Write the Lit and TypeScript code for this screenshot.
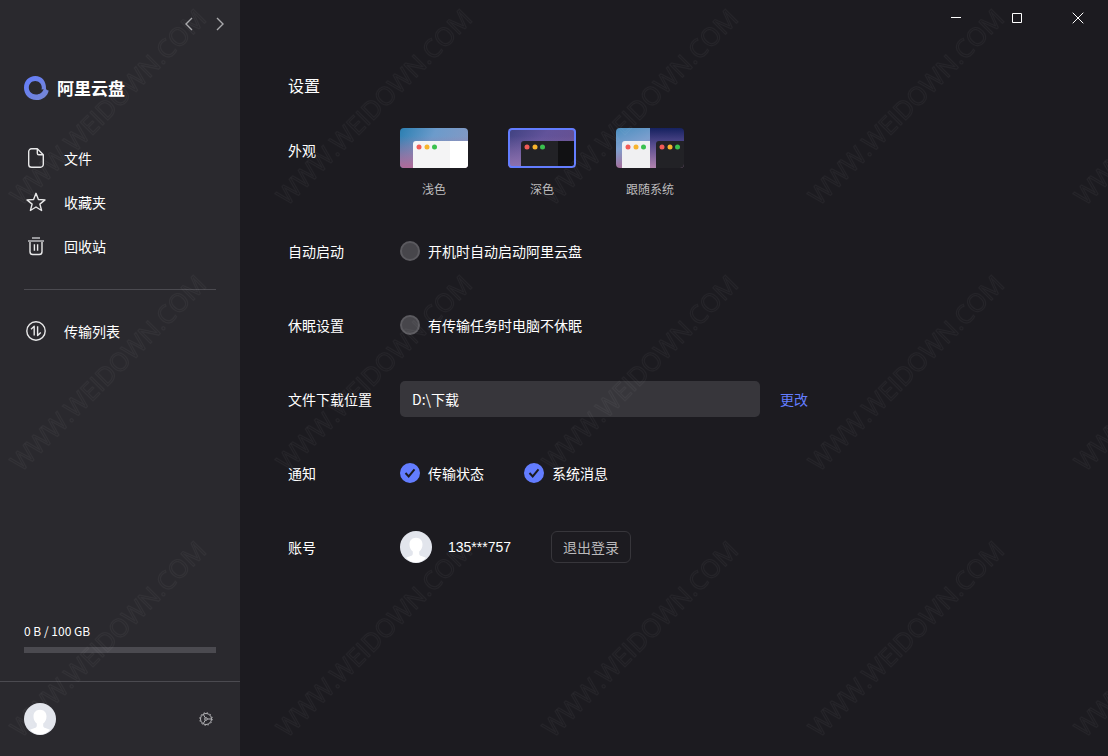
import { LitElement, html, css, svg } from "lit";
import { customElement, state } from "lit/decorators.js";

const personShape = svg`
  <circle cx="16" cy="16" r="16" fill="#e2e5ec"/>
  <path d="M16 6.800c-4 0-6.500 2.800-6.500 6.600 0 3 1.200 5.600 3.300 7.100v2.300c0 1.200-.8 1.900-2.200 2.300l-4.600 1.600C8.500 29.400 12 31.600 16 31.600s7.500-2.200 10-4.900l-4.600-1.600c-1.400-.4-2.200-1.100-2.200-2.300v-2.300c2.100-1.500 3.300-4.100 3.300-7.100 0-3.800-2.500-6.600-6.500-6.600z" fill="#fff"/>`;

const navIcons: Record<string, unknown> = {
  file: svg`<path d="M11.300.8H5.500A2.800 2.800 0 0 0 2.700 3.600v12.800a2.800 2.800 0 0 0 2.800 2.800h9a2.800 2.800 0 0 0 2.800-2.800V6.800L11.300.8v4.500a1.500 1.500 0 0 0 1.500 1.500h4.500"/>`,
  star: svg`<path d="M10 1.300l2.400 6.200 6.600.4-5.100 4.200 1.700 6.400L10 15l-5.600 3.500 1.700-6.400L1 7.900l6.600-.4z"/>`,
  trash: svg`<path d="M6 2h8M2 5h16" stroke="#98989c" stroke-width="1.800"/><path d="M4 6v9.700A2.800 2.800 0 0 0 6.800 18.500h6.400a2.800 2.800 0 0 0 2.800-2.800V6M8.400 8.300v6.400M11.600 8.300v6.400"/>`,
  transfer: svg`<circle cx="10" cy="10" r="9.200"/><path d="M5 8.200L8.200 5.300v9.200M11.600 5.300v9.200l3.200-3"/>`,
};

function navIcon(name: string) {
  return html`<svg class="nav-icon" viewBox="0 0 20 20" aria-hidden="true">${navIcons[name]}</svg>`;
}

function themeArt(kind: string) {
  const dots = (x: number) => svg`
    <circle cx=${x} cy="19" r="2.500" fill="#f25b57"/>
    <circle cx=${x + 8} cy="19" r="2.500" fill="#f7b42d"/>
    <circle cx=${x + 15.500} cy="19" r="2.500" fill="#3bc14f"/>`;
  if (kind === "light")
    return svg`
      <defs>
        <linearGradient id="l1" x1="0" y1="0" x2="1" y2=".3"><stop stop-color="#2b7fb2"/><stop offset=".5" stop-color="#6c9bcb"/><stop offset="1" stop-color="#8299c4"/></linearGradient>
        <linearGradient id="l2" x1="0" y1="0" x2="0" y2="1"><stop offset=".2" stop-color="#b06a98" stop-opacity="0"/><stop offset="1" stop-color="#b06a98"/></linearGradient>
      </defs>
      <rect width="68" height="40" fill="url(#l1)"/><rect width="68" height="40" fill="url(#l2)"/>
      <path d="M13 40V16a3 3 0 0 1 3-3h52v27z" fill="#f4f4f5"/><path d="M50 13h18v27H50z" fill="#fff"/>${dots(19)}`;
  if (kind === "dark")
    return svg`
      <defs><linearGradient id="d1" x1="0" y1="0" x2="1" y2=".5"><stop stop-color="#3e4180"/><stop offset=".5" stop-color="#62539a"/><stop offset="1" stop-color="#675090"/></linearGradient>
      <linearGradient id="d2" x1="0" y1="0" x2="0" y2="1"><stop offset=".2" stop-color="#8f72ae" stop-opacity="0"/><stop offset="1" stop-color="#8f72ae"/></linearGradient></defs>
      <rect width="68" height="40" fill="url(#d1)"/><rect width="68" height="40" fill="url(#d2)"/>
      <path d="M13 40V16a3 3 0 0 1 3-3h52v27z" fill="#222226"/><path d="M50 13h18v27H50z" fill="#111113"/>${dots(19)}`;
  return svg`
    <defs>
      <linearGradient id="s1" x1="0" y1="0" x2=".3" y2="1"><stop stop-color="#4b8fc0"/><stop offset=".5" stop-color="#7d9fce"/><stop offset="1" stop-color="#a96a96"/></linearGradient>
      <linearGradient id="s2" x1="0" y1="0" x2="0" y2="1"><stop stop-color="#15215f"/><stop offset=".4" stop-color="#544a8d"/><stop offset="1" stop-color="#b183ae"/></linearGradient>
    </defs>
    <rect width="34" height="40" fill="url(#s1)"/><rect x="34" width="34" height="40" fill="url(#s2)"/>
    <path d="M6 40V16a3 3 0 0 1 3-3h25v27z" fill="#f0f0f2"/><path d="M40 40V16a3 3 0 0 1 3-3h25v27z" fill="#222226"/>
    ${dots(12)}${dots(46)}`;
}

@customElement("app-root")
export class AppRoot extends LitElement {
  @state() private theme = "dark";

  static styles = css`
    :host {
      display: flex;
      position: relative;
      min-height: 100vh;
      color: #fff;
      background: #1c1b20;
      font-family: "Noto Sans CJK SC", "Noto Sans", sans-serif;
      font-size: 14px;
      line-height: 20px;
    }
    *, *::before, *::after { box-sizing: border-box; }
    button {
      padding: 0;
      border: 0;
      background: none;
      color: inherit;
      font: inherit;
      cursor: pointer;
    }
    a { color: inherit; text-decoration: none; }
    svg { display: block; }

    .sidebar {
      flex: none;
      display: flex;
      flex-direction: column;
      width: 240px;
      background: #2a292e;
    }
    .history {
      display: flex;
      justify-content: flex-end;
      gap: 7px;
      padding: 12px 8px 0;
    }
    .history button {
      display: grid;
      place-items: center;
      width: 24px;
      height: 24px;
    }
    .history svg {
      width: 12px;
      height: 14px;
      fill: none;
      stroke: #a9a9ac;
      stroke-width: 1.4;
    }
    .brand {
      display: flex;
      align-items: center;
      gap: 8px;
      padding: 40px 24px 0;
      font-size: 17px;
      line-height: 24px;
      font-weight: 700;
    }
    .logo { width: 25px; height: 24px; }
    .nav {
      display: flex;
      flex-direction: column;
      padding: 36px 24px 0;
    }
    .nav a {
      display: flex;
      align-items: center;
      gap: 18px;
      height: 44px;
      padding-left: 2px;
    }
    .nav hr {
      width: 100%;
      height: 1px;
      margin: 21px 0 19px;
      border: 0;
      background: #4b4a50;
    }
    .nav-icon {
      width: 20px;
      height: 20px;
      fill: none;
      stroke: #e8e8e9;
      stroke-width: 1.4;
      stroke-linejoin: round;
    }
    .storage {
      display: flex;
      flex-direction: column;
      gap: 6px;
      margin-top: auto;
      padding: 0 24px 28px;
      font-size: 12px;
    }
    .track { height: 6px; background: #4b4a50; }
    .fill { height: 100%; background: #637dff; }
    .profile {
      display: flex;
      align-items: center;
      justify-content: space-between;
      height: 75px;
      padding: 0 24px;
      border-top: 1px solid #4b4a50;
    }
    .avatar { width: 32px; height: 32px; }
    .gear {
      width: 20px;
      height: 20px;
      fill: none;
      stroke: #b4b4b7;
    }

    .main {
      flex: 1;
      min-width: 0;
    }
    .window-controls {
      display: flex;
      justify-content: flex-end;
      gap: 1px;
    }
    .window-controls button {
      display: grid;
      place-items: center;
      width: 60px;
      height: 36px;
    }
    .window-controls svg {
      width: 12px;
      height: 12px;
      fill: none;
      stroke: #fff;
    }
    .settings { padding: 38px 48px; }
    h1 {
      margin: 0 0 32px;
      font-size: 16px;
      line-height: 22px;
      font-weight: 400;
    }
    .row {
      display: grid;
      grid-template-columns: 112px minmax(0, 1fr);
      align-items: center;
      min-height: 36px;
      margin-bottom: 38px;
    }
    .row.looks { align-items: start; margin-bottom: 35px; }
    .looks > .label { line-height: 44px; }
    .controls {
      display: flex;
      align-items: center;
      gap: 40px;
      min-width: 0;
    }
    .theme {
      position: relative;
      display: grid;
      justify-items: center;
      gap: 12px;
      color: #bbbabc;
      font-size: 12px;
      line-height: 18px;
      cursor: pointer;
    }
    .theme input {
      position: absolute;
      margin: 0;
      opacity: 0;
    }
    .thumb {
      position: relative;
      width: 68px;
      height: 40px;
      border-radius: 4px;
      overflow: hidden;
    }
    .thumb svg { width: 100%; height: 100%; }
    .theme input:checked + .thumb::after {
      content: "";
      position: absolute;
      inset: 0;
      border: 2px solid #637dff;
      border-radius: 4px;
    }
    .check {
      display: flex;
      align-items: center;
      gap: 8px;
      cursor: pointer;
    }
    .check input {
      appearance: none;
      width: 20px;
      height: 20px;
      margin: 0;
      border: 2px solid #5b5a5f;
      border-radius: 50%;
      background: #47464b;
    }
    .tick {
      display: grid;
      align-items: center;
    }
    .tick > * { grid-area: 1 / 1; }
    .tick svg {
      z-index: 1;
      width: 20px;
      height: 20px;
      fill: none;
      stroke: #1c1b20;
      stroke-width: 2;
      visibility: hidden;
      pointer-events: none;
    }
    .tick input:checked { border-color: #637dff; background: #637dff; }
    .tick input:checked + svg { visibility: visible; }
    .location { gap: 20px; }
    .path {
      width: 360px;
      min-width: 0;
      height: 36px;
      padding: 0 12px;
      border: 0;
      border-radius: 5px;
      color: #fff;
      background: #37363b;
      font: inherit;
    }
    .change { flex: none; color: #637dff; }
    .account {
      display: flex;
      align-items: center;
      gap: 16px;
      font-family: "Liberation Sans", sans-serif;
    }
    .logout {
      width: 80px;
      height: 32px;
      border: 1px solid #37363b;
      border-radius: 6px;
      color: #bbbabc;
    }
    .watermark {
      position: absolute;
      inset: 0;
      width: 100%;
      height: 100%;
      pointer-events: none;
    }
    .watermark text {
      font-family: "Open Sans", sans-serif;
      font-size: 25px;
      font-weight: 400;
      fill: none;
      stroke: #fff;
      stroke-opacity: 0.04;
      stroke-width: 1;
    }
  `;

  private check(text: string, checked: boolean) {
    return html`<label class="check">
      <span class="tick">
        <input type="checkbox" .checked=${checked} />
        <svg viewBox="0 0 20 20" aria-hidden="true"><path d="M5.500 10l3.200 3.400 5.800-7"/></svg>
      </span>
      ${text}
    </label>`;
  }

  private themeOption(kind: string, text: string) {
    return html`<label class="theme">
      <input type="radio" name="theme" value=${kind} .checked=${this.theme === kind}
        @change=${() => (this.theme = kind)} />
      <span class="thumb"><svg viewBox="0 0 68 40" aria-hidden="true">${themeArt(kind)}</svg></span>
      <span>${text}</span>
    </label>`;
  }

  render() {
    return html`
      <aside class="sidebar">
        <div class="history">
          <button aria-label="后退"><svg viewBox="0 0 12 14"><path d="M9 1L3 7l6 6"/></svg></button>
          <button aria-label="前进"><svg viewBox="0 0 12 14"><path d="M3 1l6 6-6 6"/></svg></button>
        </div>
        <div class="brand">
          <svg class="logo" viewBox="0 0 25 24" aria-hidden="true">
            <defs><linearGradient id="brand" x1="0" y1="0" x2="1" y2="1"><stop stop-color="#637dff"/><stop offset="1" stop-color="#7787d0"/></linearGradient></defs>
            <path fill="url(#brand)" d="M22 12.800C22.300 5.300 18 0 11.300 0 4.800 0 0 5 0 11.800 0 18.800 5.200 24 12.300 24c6.300 0 11.400-3.800 12.400-9.600-1.200.1-2.200-.4-2.700-1.600zM17.800 11.500c0 .8-.1 1.200-.3 1.900.8.100 1.500 0 2.100-.3-.8 3.400-3.700 5.500-7.600 5.500-4.200 0-7.200-2.900-7.200-7 0-3.800 2.700-6.700 6.400-6.700s6.600 2.800 6.600 6.600z" fill-rule="evenodd"/>
          </svg>
          <span>阿里云盘</span>
        </div>
        <nav class="nav">
          <a href="#files">${navIcon("file")}文件</a>
          <a href="#favorites">${navIcon("star")}收藏夹</a>
          <a href="#recycle">${navIcon("trash")}回收站</a>
          <hr />
          <a href="#transfers">${navIcon("transfer")}传输列表</a>
        </nav>
        <div class="storage">
          <span>0 B / 100 GB</span>
          <div class="track"><div class="fill" style="width: 0%"></div></div>
        </div>
        <div class="profile">
          <svg class="avatar" viewBox="0 0 32 32" aria-hidden="true">${personShape}</svg>
          <button aria-label="设置">
            <svg class="gear" viewBox="0 0 20 20">
              <circle cx="10" cy="10" r="5.500"/>
              <circle cx="10" cy="10" r="6.300" stroke-dasharray="1.300 2"/>
              <circle cx="10" cy="10" r="1.300"/>
              <path d="M11.300 10h4.200M9.300 8.900L7.200 5.200M9.300 11.100l-2.100 3.700"/>
            </svg>
          </button>
        </div>
      </aside>

      <main class="main">
        <div class="window-controls">
          <button aria-label="最小化"><svg viewBox="0 0 12 12"><path d="M1 5.500h10"/></svg></button>
          <button aria-label="最大化"><svg viewBox="0 0 12 12"><path d="M1.500 1.500h9v9h-9z"/></svg></button>
          <button aria-label="关闭"><svg viewBox="0 0 12 12"><path d="M.7.7l10.600 10.600M11.300.7L.7 11.300"/></svg></button>
        </div>
        <section class="settings">
          <h1>设置</h1>
          <div class="row looks">
            <span class="label">外观</span>
            <div class="controls" role="radiogroup" aria-label="外观">
              ${this.themeOption("light", "浅色")}
              ${this.themeOption("dark", "深色")}
              ${this.themeOption("system", "跟随系统")}
            </div>
          </div>
          <div class="row">
            <span>自动启动</span>
            <div class="controls">${this.check("开机时自动启动阿里云盘", false)}</div>
          </div>
          <div class="row">
            <span>休眠设置</span>
            <div class="controls">${this.check("有传输任务时电脑不休眠", false)}</div>
          </div>
          <div class="row">
            <label for="path">文件下载位置</label>
            <div class="controls location">
              <input class="path" id="path" type="text" readonly .value=${"D:\\下载"} />
              <button class="change">更改</button>
            </div>
          </div>
          <div class="row">
            <span>通知</span>
            <div class="controls">
              ${this.check("传输状态", true)}
              ${this.check("系统消息", true)}
            </div>
          </div>
          <div class="row">
            <span>账号</span>
            <div class="controls">
              <span class="account">
                <svg class="avatar" viewBox="0 0 32 32" aria-hidden="true">${personShape}</svg>
                135***757
              </span>
              <button class="logout">退出登录</button>
            </div>
          </div>
        </section>
      </main>

      <svg class="watermark" aria-hidden="true">
        <defs>
          <pattern id="mark" width="266" height="266" patternUnits="userSpaceOnUse">
            <text transform="translate(108 107) rotate(-45)" y="9" text-anchor="middle">WWW.WEIDOWN.COM</text>
          </pattern>
        </defs>
        <rect width="100%" height="100%" fill="url(#mark)"/>
      </svg>
    `;
  }
}
